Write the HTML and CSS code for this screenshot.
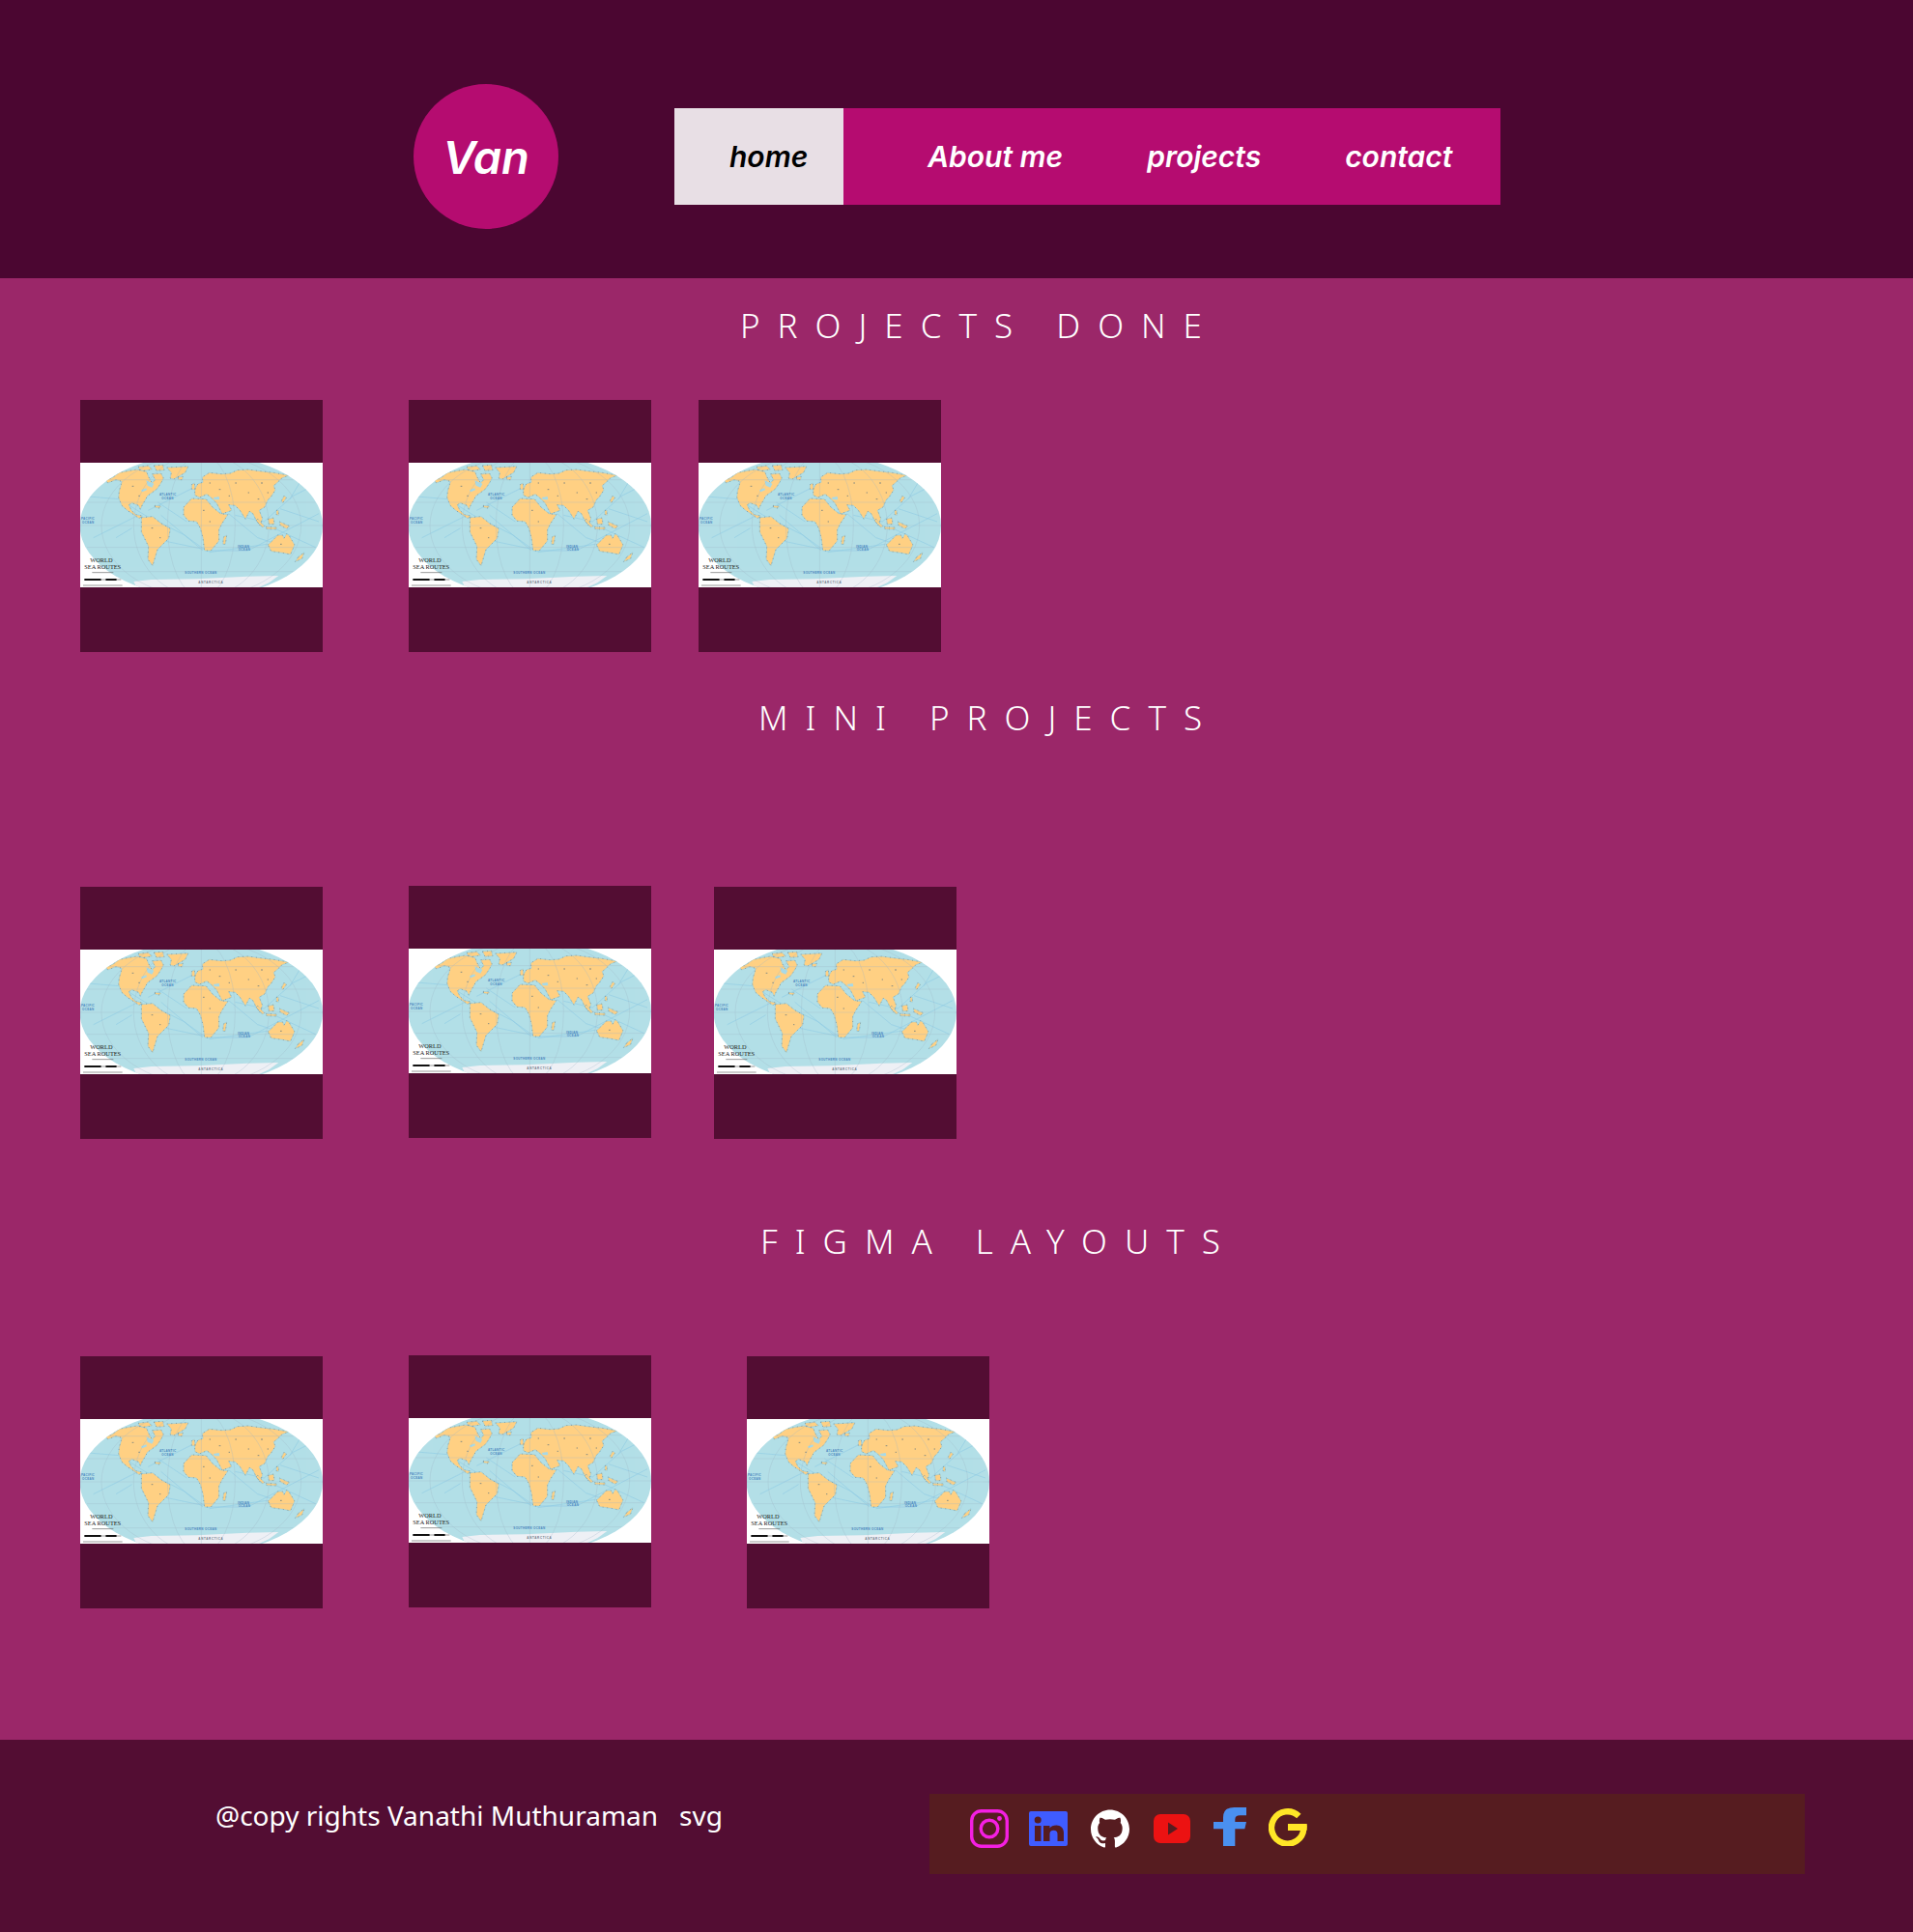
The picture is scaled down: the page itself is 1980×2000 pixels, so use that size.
FILE: index.html
```html
<!DOCTYPE html>
<html lang="en">
<head>
<meta charset="utf-8">
<title>Van - Projects</title>
<link rel="stylesheet" href="styles.css">
</head>
<body>
<svg class="defs" width="0" height="0" aria-hidden="true">
  <defs>
    <clipPath id="globe"><ellipse cx="415" cy="432" rx="377" ry="222"/></clipPath>
    <g id="land">
      <path d="M118 292L140 283L160 268L190 262L215 258L245 265L252 282L262 300L272 290L262 272L290 270L298 285L290 300L278 318L262 330L248 340L240 355L232 368L226 382L220 370L200 362L190 368L198 385L212 398L232 402L222 410L205 398L185 385L168 370L158 345L160 325L166 305L168 295L150 290L125 300Z"/>
      <path d="M219 250L250 246L262 258L236 262L222 258ZM268 246L296 244L300 260L276 262Z"/>
      <path d="M308 252L375 248L365 268L330 288L318 285L322 268Z"/>
      <path d="M229 407L264 404L290 425L319 442L314 472L279 507L264 557L249 537L251 497L229 452Z"/>
      <path d="M360 375L385 348L430 350L450 375L475 395L498 398L480 425L470 445L470 480L445 510L425 510L420 470L412 440L400 420L375 418L360 400Z"/>
      <path d="M395 318L405 302L420 298L418 282L440 268L478 272L505 270L527 260L560 258L597 263L640 268L687 276L665 285L650 300L640 308L645 322L630 345L622 352L612 375L595 385L605 410L597 432L585 415L575 395L565 388L552 412L535 385L520 370L500 368L510 385L480 396L462 362L445 345L432 335L410 345L395 338Z"/>
      <path d="M622 492L640 475L652 462L668 462L672 472L680 458L687 462L705 492L692 522L667 517L632 512Z"/>
      <path d="M484 468L494 462L490 490L482 490Z"/>
      <path d="M590 412L612 434L605 438L585 417Z"/>
      <path d="M616 436L650 438L648 444L618 443Z"/>
      <path d="M622 412L640 408L642 428L625 428Z"/>
      <path d="M658 420L690 434L680 442L660 432Z"/>
      <path d="M664 355L672 340L680 345L668 362Z"/>
      <path d="M648 385L655 385L655 400L648 398Z"/>
      <path d="M385 305L394 300L396 320L385 320Z"/>
      <path d="M342 282L358 280L356 290L344 290Z"/>
      <path d="M716 530L735 515L728 535L706 545Z"/>
      <path d="M270 370L290 372L285 378L272 376Z"/>
    </g>
    <symbol id="world-map" viewBox="39 237 753 387" preserveAspectRatio="none">
      <rect x="39" y="237" width="753" height="387" fill="#fff"/>
      <ellipse cx="415" cy="432" rx="377" ry="222" fill="#b3dfe7"/>
      <g clip-path="url(#globe)">
        <g fill="none" stroke="#8fcbe4" stroke-width="1.800">
          <path d="M40 340L160 350L240 400L360 460L430 510L560 510L780 395"/>
          <path d="M80 470L220 400M150 470L200 440M250 385L420 300M280 360L370 420M290 400L420 510"/>
          <path d="M500 395L590 470L680 500M520 400L610 420L700 340L760 310M440 515L620 490M660 380L780 420"/>
          <path d="M690 350L720 300M640 440L770 500M300 480L420 505"/>
        </g>
        <path d="M205 606L260 600L400 598L560 590L655 588L625 610L590 626L215 626Z" fill="#eef0f5"/>
        <use href="#land" fill="#ffd083" stroke="#8accE6" stroke-width="1.400"/>
        <use href="#land" fill="none" stroke="#4c6a80" stroke-width="2" stroke-dasharray="3 11" opacity=".7"/>
        <path d="M244 292L268 302L262 314L248 308ZM228 322L244 316L246 322L232 328ZM452 345L470 342L472 352L456 352Z" fill="#a9d9e6"/>
        <path d="M440 300h4M470 320h5M520 300h5M560 330h4M600 300h6M590 350h5M500 340h4M620 330h4M420 385h5M440 420h4M200 310h5M220 340h5M260 440h5M285 470h4M660 490h5" stroke="#4c6a80" stroke-width="2" fill="none"/>
        <g fill="none" stroke="#9db5c4" stroke-width="1.200" opacity=".75">
          <ellipse cx="415" cy="432" rx="105" ry="222"/>
          <ellipse cx="415" cy="432" rx="210" ry="222"/>
          <ellipse cx="415" cy="432" rx="310" ry="222"/>
          <path d="M415 210V654M39 432H792M60 360H770M60 500H770M130 290H700M130 575H700"/>
        </g>
      </g>
      <g class="map-label">
        <text x="285" y="340" class="map-sea">ATLANTIC</text>
        <text x="292" y="352" class="map-sea">OCEAN</text>
        <text x="42" y="414" class="map-sea">PACIFIC</text>
        <text x="45" y="426" class="map-sea">OCEAN</text>
        <text x="528" y="500" class="map-sea">INDIAN</text>
        <text x="530" y="510" class="map-sea">OCEAN</text>
        <text x="364" y="582" class="map-sea">SOUTHERN OCEAN</text>
        <text x="406" y="612" class="map-ant">ANTARCTICA</text>
      </g>
      <text x="70" y="547" class="map-title">WORLD</text>
      <text x="52" y="566" class="map-title">SEA ROUTES</text>
      <path d="M52 597h52v6H52z" fill="#111"/>
      <path d="M118 597h34v6h-34z" fill="#111"/>
      <path d="M104 600h14M152 600h14M48 618H170M76 578h66" stroke="#666" stroke-width="2" fill="none"/>
    </symbol>
  </defs>
</svg>

<header class="site-header">
  <div class="logo">Van</div>
  <nav class="nav">
    <a class="nav-link nav-link-active" href="#">home</a>
    <a class="nav-link" href="#">About me</a>
    <a class="nav-link" href="#">projects</a>
    <a class="nav-link" href="#">contact</a>
  </nav>
</header>

<main class="content">
  <section class="group group-done">
    <h2 class="group-title title-done">PROJECTS DONE</h2>
    <div class="cards">
      <div class="card"><svg class="map"><use href="#world-map"/></svg></div>
      <div class="card card-second"><svg class="map"><use href="#world-map"/></svg></div>
      <div class="card card-third-done"><svg class="map"><use href="#world-map"/></svg></div>
    </div>
  </section>
  <section class="group group-mini">
    <h2 class="group-title title-mini">MINI PROJECTS</h2>
    <div class="cards cards-mini">
      <div class="card card-low"><svg class="map"><use href="#world-map"/></svg></div>
      <div class="card card-second"><svg class="map"><use href="#world-map"/></svg></div>
      <div class="card card-low card-third-mini"><svg class="map"><use href="#world-map"/></svg></div>
    </div>
  </section>
  <section class="group group-figma">
    <h2 class="group-title title-figma">FIGMA LAYOUTS</h2>
    <div class="cards cards-figma">
      <div class="card card-low"><svg class="map"><use href="#world-map"/></svg></div>
      <div class="card card-second"><svg class="map"><use href="#world-map"/></svg></div>
      <div class="card card-low card-third-figma"><svg class="map"><use href="#world-map"/></svg></div>
    </div>
  </section>
</main>

<footer class="site-footer">
  <p class="copy">@copy rights Vanathi Muthuraman<span class="copy-extra">svg</span></p>
  <div class="socials">
    <svg class="icon icon-instagram" viewBox="0 0 40 40"><rect x="1.700" y="1.700" width="36.600" height="36.600" rx="10" fill="none" stroke="#f41fe2" stroke-width="3.400"/><circle cx="20" cy="20" r="8.800" fill="none" stroke="#f41fe2" stroke-width="3.400"/><circle cx="30.500" cy="9.500" r="2.400" fill="#f41fe2"/></svg>
    <svg class="icon icon-linkedin" viewBox="0 0 40 36"><path fill="#3f5cff" fill-rule="evenodd" d="M2 0H38a2 2 0 0 1 2 2V34a2 2 0 0 1-2 2H2a2 2 0 0 1-2-2V2a2 2 0 0 1 2-2ZM6 15V31H12.500V15ZM9.200 5.500a3.500 3.500 0 1 0 0 7a3.500 3.500 0 1 0 0-7ZM15 15V31H21.500V23.500C21.500 21 22.800 19.800 25.500 19.800C28.200 19.800 29.500 21 29.500 23.500V31H36V22.500C36 17.500 33 14.500 28.300 14.500C25 14.500 22.800 15.800 21.500 17.500V15Z"/></svg>
    <svg class="icon icon-github" viewBox="0 0 24 24"><path fill="#fff" d="M12 .297c-6.630 0-12 5.373-12 12 0 5.303 3.438 9.800 8.205 11.385.6.113.82-.258.82-.577 0-.285-.01-1.040-.015-2.040-3.338.724-4.042-1.610-4.042-1.610C4.422 18.070 3.633 17.700 3.633 17.700c-1.087-.744.084-.729.084-.729 1.205.084 1.838 1.236 1.838 1.236 1.070 1.835 2.809 1.305 3.495.998.108-.776.417-1.305.76-1.605-2.665-.3-5.466-1.332-5.466-5.930 0-1.310.465-2.380 1.235-3.220-.135-.303-.54-1.523.105-3.176 0 0 1.005-.322 3.300 1.230.96-.267 1.980-.399 3-.405 1.020.006 2.040.138 3 .405 2.280-1.552 3.285-1.230 3.285-1.230.645 1.653.24 2.873.12 3.176.765.84 1.230 1.910 1.230 3.220 0 4.610-2.805 5.625-5.475 5.920.42.36.81 1.096.81 2.220 0 1.606-.015 2.896-.015 3.286 0 .315.21.69.825.57C20.565 22.092 24 17.592 24 12.297c0-6.627-5.373-12-12-12"/></svg>
    <svg class="icon icon-youtube" viewBox="0 0 38 30"><rect width="38" height="30" rx="7" fill="#ec1212"/><path d="M15 8.500L25 15L15 21.500Z" fill="#561c20"/></svg>
    <svg class="icon icon-facebook" viewBox="198 33 102 120"><path fill="#4a90f0" d="M228 153V100H198V78H228V64Q228 33 262 33H300V58H280Q265 58 265 70V78H300L295 100H265V153Z"/></svg>
    <svg class="icon icon-google" viewBox="0 0 120 120"><path fill="none" stroke="#ffe627" stroke-width="19" d="M94 27A50 50 0 1 0 109 66"/><path fill="#ffe627" d="M60 51H119C120 58 120 66 118 72H60Z"/></svg>
  </div>
</footer>
</body>
</html>
```
FILE: styles.css
```css
* { box-sizing: border-box; }
html, body { margin: 0; padding: 0; }
body { width: 1980px; height: 2000px; font-family: "Noto Sans", sans-serif; color: #fff; background: #9b2769; }
.defs { display: block; height: 0; }

.site-header { height: 288px; background: #4b0631; display: flex; align-items: flex-start; padding: 87px 0 0 428px; }
.logo { width: 150px; height: 150px; border-radius: 50%; background: #b50c70; display: flex; align-items: center; justify-content: center; font-family: "Inter", sans-serif; font-style: italic; font-weight: 600; font-size: 47px; color: #fff; }
.nav { display: flex; margin: 25px 0 0 120px; width: 855px; height: 100px; background: #b50c70; }
.nav-link { display: flex; align-items: center; padding: 0 0 0 87px; height: 100%; font-family: "Inter", sans-serif; font-style: italic; font-weight: 600; font-size: 30px; color: #fff; text-decoration: none; white-space: nowrap; }
.nav-link-active { background: #e8dfe5; color: #000; padding: 0 37px 0 57px; }

.content { height: 1513px; background: #9b2769; }
.group-title { margin: 0; height: 50px; line-height: 50px; font-weight: 300; font-size: 35px; letter-spacing: 18px; white-space: nowrap; }
.group-done { padding-top: 24px; }
.title-done { padding-left: 766px; }
.title-mini { padding-left: 785px; }
.title-figma { padding-left: 787px; }
.group-mini { padding-top: 43px; }
.group-figma { padding-top: 81px; }

.cards { display: flex; align-items: flex-start; padding-left: 83px; margin-top: 52px; }
.cards-mini { margin-top: 149px; }
.cards-figma { margin-top: 93px; }
.card { width: 251px; height: 261px; padding-top: 65px; background: #530d33; flex: none; }
.card-low { margin-top: 1px; }
.card-second { margin-left: 89px; }
.card-third-done { margin-left: 49px; }
.card-third-mini { margin-left: 65px; }
.card-third-figma { margin-left: 99px; }
.map { display: block; width: 251px; height: 129px; }
.map-sea { font: 700 9px "Liberation Sans", sans-serif; fill: #4a86c0; letter-spacing: 1px; }
.map-ant { font: 700 9px "Liberation Sans", sans-serif; fill: #6f7a88; letter-spacing: 2px; }
.map-title { font: 400 19px "Liberation Serif", serif; fill: #222; }

.site-footer { height: 199px; background: #530d33; display: flex; align-items: flex-start; padding: 59px 0 0 223px; }
.copy { margin: 0; width: 739px; font-size: 28px; font-weight: 400; line-height: 38px; white-space: nowrap; }
.copy-extra { margin-left: 22px; }
.socials { width: 906px; height: 83px; margin-top: -3px; background: #561c20; display: flex; align-items: flex-start; padding-left: 42px; }
.icon { display: block; flex: none; }
.icon-instagram { width: 40px; height: 40px; margin-top: 16px; }
.icon-linkedin { width: 40px; height: 36px; margin: 18px 0 0 21px; }
.icon-github { width: 40px; height: 40px; margin: 16px 0 0 24px; }
.icon-youtube { width: 38px; height: 30px; margin: 21px 0 0 25px; }
.icon-facebook { width: 34px; height: 40px; margin: 14px 0 0 24px; }
.icon-google { width: 40px; height: 40px; margin: 14px 0 0 23px; }
```
